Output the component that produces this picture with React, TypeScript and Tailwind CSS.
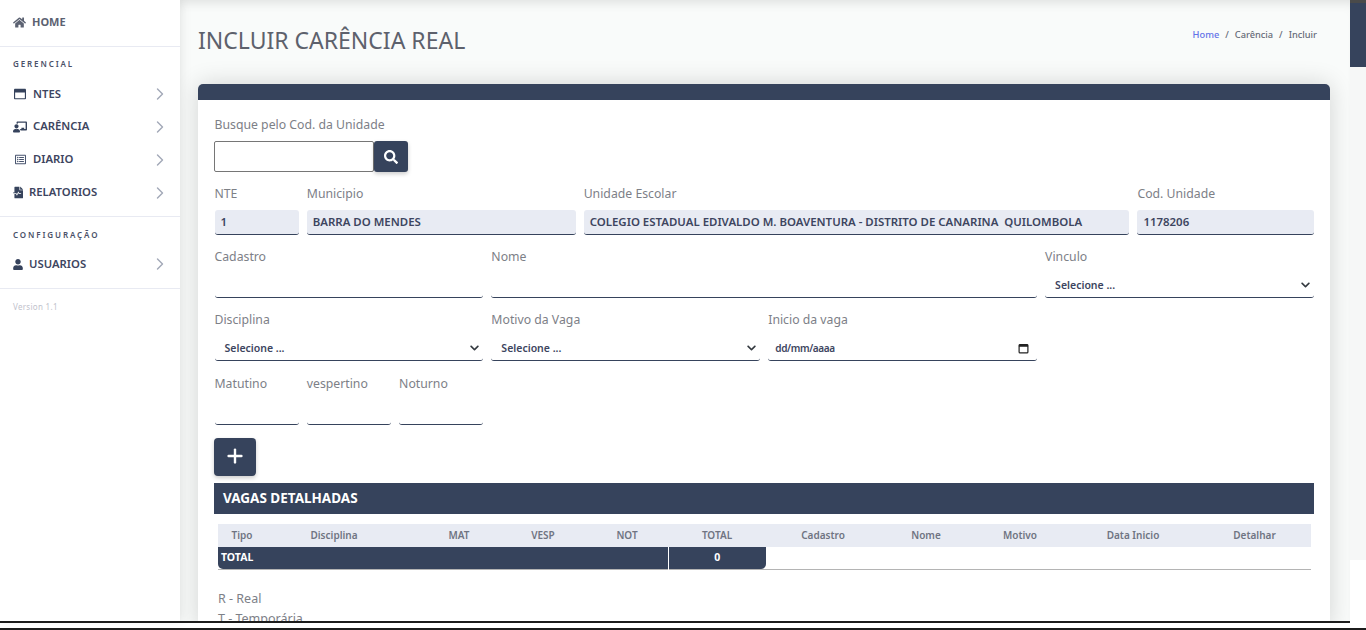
import React from 'react';
import { ChevronRight, Plus } from 'lucide-react';
import {
  FaHome,
  FaRegWindowMaximize,
  FaChalkboardTeacher,
  FaRegListAlt,
  FaFileMedicalAlt,
  FaUser,
  FaSearch,
  FaChevronDown,
} from 'react-icons/fa';

const menuMain = [
  { label: 'NTES', icon: <FaRegWindowMaximize className="ml-[1px] w-[12px] h-[12px] text-[#36435c]" />, textClass: 'ml-[7px] pt-[1px]', h: 'h-[33px]' },
  { label: 'CARÊNCIA', icon: <FaChalkboardTeacher className="w-[14px] h-[14px] text-[#36435c]" />, textClass: 'ml-[6px]', h: 'h-[33px]' },
  { label: 'DIARIO', icon: <FaRegListAlt className="ml-[2px] w-[11px] h-[11px] text-[#4a5670]" />, textClass: 'ml-[7px]', h: 'h-[33px]' },
  { label: 'RELATORIOS', icon: <FaFileMedicalAlt className="w-[10px] h-[13px] text-[#36435c]" />, textClass: 'ml-[6px]', h: 'h-[33px]' },
];

function MenuItem({ label, icon, textClass, h }: { label: string; icon: React.ReactNode; textClass: string; h: string }) {
  return (
    <div className={`flex items-center pl-[13px] pr-[10px] ${h}`}>
      <span className="flex items-center">{icon}</span>
      <span className={`${textClass} text-[11.3px] font-semibold text-[#3d4560]`}>{label}</span>
      <ChevronRight className="ml-auto w-[20px] h-[20px] text-[#a3a9b8]" strokeWidth={1.7} />
    </div>
  );
}

function Sidebar() {
  return (
    <aside className="w-[180px] shrink-0 bg-white shadow-[2px_0_10px_rgba(0,0,0,0.08)] z-10">
      <div className="h-[47px] pb-[2px] flex items-center pl-[13px] border-b border-[#e8eaf2]">
        <FaHome className="w-[13px] h-[13px] text-[#5c6272]" />
        <span className="ml-[6px] text-[11px] font-bold text-[#5c6272]">HOME</span>
      </div>
      <div className="h-[170px] border-b border-[#e8eaf2] pt-[11px]">
        <div className="pl-[13px] h-[19px] text-[8px] font-semibold tracking-[1.9px] text-[#4a5168] leading-[11px]">GERENCIAL</div>
        <div>
          {menuMain.map((m) => (
            <MenuItem key={m.label} {...m} />
          ))}
        </div>
      </div>
      <div className="h-[72px] border-b border-[#e8eaf2] pt-[12px]">
        <div className="pl-[13px] h-[20px] text-[8px] font-semibold tracking-[1.9px] text-[#4a5168] leading-[11px]">CONFIGURAÇÃO</div>
        <MenuItem
          label="USUARIOS"
          icon={<FaUser className="w-[10px] h-[11px] text-[#36435c]" />}
          textClass="ml-[6px]"
          h="h-[30px]"
        />
      </div>
      <div className="pl-[13px] pt-[12px] text-[8px] tracking-[0.3px] text-[#bfc2cc]">Version 1.1</div>
    </aside>
  );
}

function Label({ children }: { children: React.ReactNode }) {
  return <div className="h-[28px] pt-[2px] text-[12.25px] leading-[20px] text-[#7d8087]">{children}</div>;
}

function ReadOnly({ label, value, span }: { label: string; value: string; span: string }) {
  return (
    <div className={span}>
      <Label>{label}</Label>
      <div className="h-[25px] px-[6px] flex items-center bg-[#e8ebf3] border-b border-[#36435c] rounded-[3px] text-[11.45px] font-semibold text-[#3d4560] whitespace-pre">
        {value}
      </div>
    </div>
  );
}

function TextField({ label, span }: { label: string; span: string }) {
  return (
    <div className={span}>
      <Label>{label}</Label>
      <input className="block w-full h-[25px] bg-white border-b border-[#36435c] rounded-[3px] outline-none" />
    </div>
  );
}

function SelectField({ label, span }: { label: string; span: string }) {
  return (
    <div className={span}>
      <Label>{label}</Label>
      <div className="h-[25px] pl-[10px] pr-[3px] flex items-center justify-between bg-white border-b border-[#36435c] rounded-[3px]">
        <span className="pt-[1px] text-[10.5px] font-semibold text-[#3d4560]">Selecione ...</span>
        <FaChevronDown className="w-[11px] h-[10px] text-[#343a40]" />
      </div>
    </div>
  );
}

function DateField({ label, span }: { label: string; span: string }) {
  return (
    <div className={span}>
      <Label>{label}</Label>
      <div className="h-[25px] pl-[7px] pr-[8px] flex items-center justify-between bg-white border-b border-[#36435c] rounded-[3px]">
        <span className="pt-[1px] text-[10px] tracking-[-0.35px] font-semibold text-[#3d4560]">dd/mm/aaaa</span>
        <svg viewBox="0 0 12 12" className="w-[11px] h-[11px]" fill="none">
          <rect x="1.2" y="1.7" width="9.6" height="9.1" rx="1" stroke="#222" strokeWidth="1.3" />
          <rect x="1" y="1.5" width="10" height="2.6" fill="#222" />
        </svg>
      </div>
    </div>
  );
}

const headers = [
  { name: 'Tipo', cls: 'w-[48px]' },
  { name: 'Disciplina', cls: 'w-[136px]' },
  { name: 'MAT', cls: 'w-[98px] pl-[16px]' },
  { name: 'VESP', cls: 'w-[86px]' },
  { name: 'NOT', cls: 'w-[82px]' },
  { name: 'TOTAL', cls: 'w-[98px]' },
  { name: 'Cadastro', cls: 'w-[114px]' },
  { name: 'Nome', cls: 'w-[92px]' },
  { name: 'Motivo', cls: 'w-[96px]' },
  { name: 'Data Inicio', cls: 'w-[130px]' },
  { name: 'Detalhar', cls: 'w-[113px]' },
];

function VagasTable() {
  return (
    <table className="mt-[10px] mx-[4px] w-[1093px] table-fixed border-collapse border-b border-[#b4b4b4]">
      <thead>
        <tr className="h-[23px] bg-[#e8ebf3]">
          {headers.map((h) => (
            <th key={h.name} className={`${h.cls} p-0 text-center text-[10px] font-semibold text-[#6f7482]`}>
              {h.name}
            </th>
          ))}
        </tr>
      </thead>
      <tbody>
        <tr className="h-[22px]">
          <td colSpan={5} className="p-0 pl-[3px] bg-[#36435c] rounded-bl-[5px] border-r border-white text-[10.5px] font-bold text-white">
            TOTAL
          </td>
          <td className="p-0 bg-[#36435c] rounded-br-[5px] text-center text-[10.5px] font-bold text-white">0</td>
          <td colSpan={5} className="p-0" />
        </tr>
      </tbody>
    </table>
  );
}

export default function App() {
  return (
    <div className="w-[1366px] h-[630px] overflow-hidden flex flex-col bg-white font-['Noto_Sans',sans-serif]">
      <div className="h-[621px] flex shrink-0">
        <Sidebar />
        <main className="w-[1170px] shrink-0 overflow-hidden bg-[#f9fbfa] shadow-[inset_0_10px_12px_-8px_rgba(0,0,0,0.12)]">
          <div className="h-[84px] pl-[18px] pr-[33px] flex justify-between">
            <h1 className="pt-[24px] text-[23px] leading-[32px] font-normal text-[#5d616c]">INCLUIR CARÊNCIA REAL</h1>
            <div className="pt-[27px] flex gap-[6px] text-[9.25px] leading-[15px] font-medium text-[#666b78]">
              <span className="text-[#6373e8]">Home</span>
              <span>/</span>
              <span>Carência</span>
              <span>/</span>
              <span>Incluir</span>
            </div>
          </div>
          <section className="ml-[18px] w-[1132px] bg-white rounded-t-[5px] shadow-[0_0_25px_rgba(0,0,0,0.16)]">
            <div className="h-[16px] bg-[#36435c] rounded-t-[5px]" />
            <div className="px-[16px] pt-[15px]">
              <div className="h-[26px] pl-[0.5px] text-[12.25px] leading-[20px] text-[#7d8087]">Busque pelo Cod. da Unidade</div>
              <div className="flex h-[31px]">
                <input className="w-[160px] h-[31px] bg-white border border-[#767676] rounded-[2px] outline-none" />
                <button className="w-[34px] h-[31px] bg-[#36435c] rounded-[3px] shadow-[0_2px_4px_rgba(0,0,0,0.2)] flex items-center justify-center">
                  <FaSearch className="w-[14px] h-[14px] text-white" />
                </button>
              </div>
              <div className="mt-[10px] ml-[0.5px] grid grid-cols-12 gap-x-2 gap-y-[10px]">
                <ReadOnly span="col-span-1" label="NTE" value="1" />
                <ReadOnly span="col-span-3" label="Municipio" value="BARRA DO MENDES" />
                <ReadOnly span="col-span-6" label="Unidade Escolar" value="COLEGIO ESTADUAL EDIVALDO M. BOAVENTURA - DISTRITO DE CANARINA  QUILOMBOLA" />
                <ReadOnly span="col-span-2" label="Cod. Unidade" value="1178206" />
                <TextField span="col-span-3" label="Cadastro" />
                <TextField span="col-span-6" label="Nome" />
                <SelectField span="col-span-3" label="Vinculo" />
                <SelectField span="col-span-3" label="Disciplina" />
                <SelectField span="col-span-3" label="Motivo da Vaga" />
                <DateField span="col-span-3" label="Inicio da vaga" />
                <div className="col-span-3" />
                <TextField span="col-span-1 mt-[1px]" label="Matutino" />
                <TextField span="col-span-1 mt-[1px]" label="vespertino" />
                <TextField span="col-span-1 mt-[1px]" label="Noturno" />
              </div>
              <button className="mt-[13px] pb-[2px] w-[42px] h-[38px] bg-[#36435c] rounded-[4px] shadow-[0_2px_4px_rgba(0,0,0,0.2)] flex items-center justify-center">
                <Plus className="w-[22px] h-[22px] text-white" strokeWidth={2.6} />
              </button>
              <div className="mt-[7px] h-[31px] pl-[9px] flex items-center bg-[#36435c] text-[13.5px] font-bold text-white">
                VAGAS DETALHADAS
              </div>
              <VagasTable />
              <div className="mt-[19px] pl-[4px] text-[12.5px] leading-[20px] text-[#7d8087]">
                <div>R - Real</div>
                <div>T - Temporária</div>
              </div>
            </div>
          </section>
        </main>
        <div className="w-[16px] shrink-0 bg-[#f8f9f9]">
          <div className="h-[3px] bg-[#4a4a4a]" />
          <div className="h-[64px] bg-[#36435c]" />
          <div className="h-[493px] bg-[#f6f7f7]" />
          <div className="h-[61px] bg-white" />
        </div>
      </div>
      <div className="h-[2px] w-[1350px] bg-[#1c1c1c]" />
      <div className="h-[5px] bg-white" />
      <div className="h-[2px] bg-[#1c1c1c]" />
    </div>
  );
}
